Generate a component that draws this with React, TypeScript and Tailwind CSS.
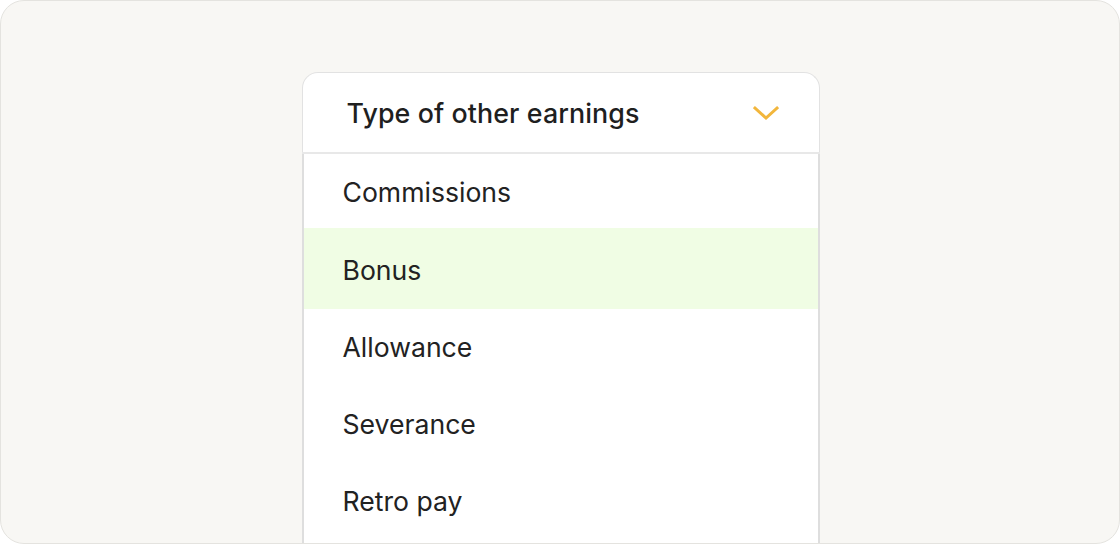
import React from "react";

const items = ["Commissions", "Bonus", "Allowance", "Severance", "Retro pay"];

export default function App() {
  return (
    <div className="w-[1120px] h-[544px] overflow-hidden bg-white" style={{ fontFamily: "Inter, 'Noto Sans', sans-serif" }}>
      <div className="w-full h-full rounded-[24px] border border-[#e4e3df] bg-[#f8f7f4] overflow-hidden flex justify-center">
        <div className="mt-[71px] w-[518px] ml-[1px] flex flex-col">
          <div className="h-[80px] shrink-0 rounded-t-[16px] border-[1.5px] border-b-0 border-[#e2e2e2] bg-white flex items-center justify-between pl-[44px] pr-[40px] pt-[2px]">
            <span className="text-[26.8px] font-medium text-[#1f1f1f] leading-none tracking-[0.1px]">Type of other earnings</span>
            <svg width="26" height="16" viewBox="0 0 26 16" fill="none" className="-mt-[2px]">
              <path d="M2 3 L13 13 L24 3" stroke="#f2b63c" strokeWidth="3" strokeLinecap="square" strokeLinejoin="miter" />
            </svg>
          </div>
          <div className="h-[2px] bg-[#e8e8e8] shrink-0" />
          <div className="flex-1 bg-white border-x-2 border-[#dedede] flex flex-col">
            {items.map((it, i) => (
              <div
                key={it}
                className={
                  (i === 0 ? "h-[74px] pt-[3px] " : i === 1 ? "h-[81px] bg-[#f0fde4] pt-[3px] " : "h-[77px] pt-0 ") +
                  "flex items-center pl-[39px] text-[26.6px] text-[#222222] leading-none shrink-0"
                }
              >
                {it}
              </div>
            ))}
          </div>
        </div>
      </div>
    </div>
  );
}
